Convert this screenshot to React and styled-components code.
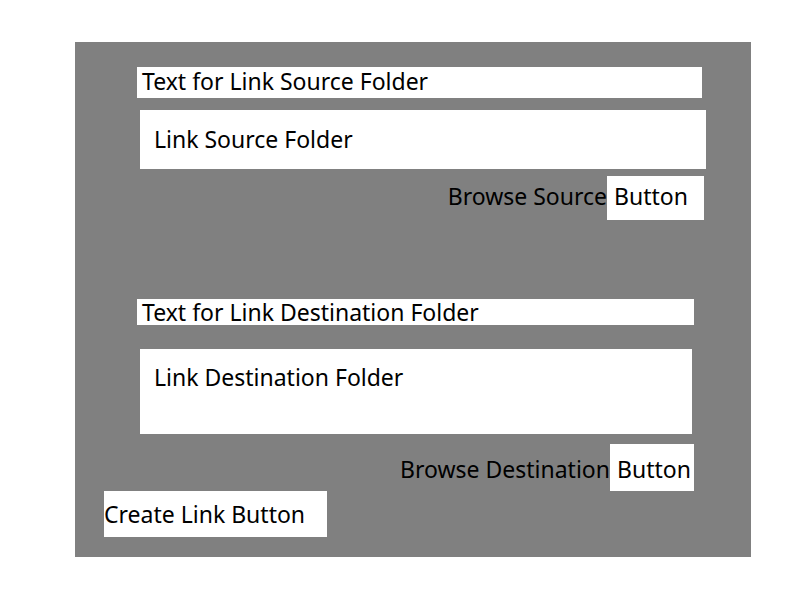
import React from "react";
import styled, { createGlobalStyle } from "styled-components";

const GlobalStyle = createGlobalStyle`
  * { box-sizing: border-box; }
  body { margin: 0; background: #fff; }
  body, input, button { font: 23px/30px "Noto Sans", "Open Sans", sans-serif; color: #000; }
`;

const Page = styled.main`
  padding: 42px 49px 43px 75px;
`;

const Panel = styled.form`
  display: flex;
  flex-direction: column;
  background: #808080;
  padding: 25px 45px 20px 29px;
`;

const Group = styled.section`
  display: flex;
  flex-direction: column;
  margin-left: 33px;
  margin-right: ${(p) => p.$right || 0}px;
  margin-bottom: ${(p) => p.$after || 0}px;
`;

const Caption = styled.label`
  background: #fff;
  height: ${(p) => p.$height}px;
  line-height: ${(p) => p.$line}px;
  padding-left: 5px;
  margin-right: ${(p) => p.$right || 0}px;
  white-space: nowrap;
`;

const PathField = styled.input`
  border: 0;
  border-radius: 0;
  outline: 0;
  background: #fff;
  height: ${(p) => p.$height}px;
  padding: 0 14px ${(p) => p.$lift || 0}px;
  margin: ${(p) => p.$gap}px ${(p) => p.$right || 0}px 0 3px;
`;

const BrowseRow = styled.div`
  display: flex;
  justify-content: flex-end;
  margin-top: ${(p) => p.$gap}px;
  margin-right: ${(p) => p.$right || 0}px;
`;

const BrowseButton = styled.button`
  display: flex;
  border: 0;
  padding: 0;
  background: none;
  white-space: nowrap;
  height: ${(p) => p.$height}px;
  line-height: ${(p) => p.$line}px;
`;

const Highlight = styled.span`
  background: #fff;
  width: ${(p) => p.$width}px;
  height: 100%;
  padding-left: 7px;
  text-align: left;
`;

const CreateButton = styled.button`
  align-self: flex-start;
  width: 223px;
  height: 46px;
  border: 0;
  padding: 0;
  background: #fff;
  text-align: left;
  white-space: nowrap;
`;

export default function App() {
  return (
    <>
      <GlobalStyle />
      <Page>
        <Panel onSubmit={(e) => e.preventDefault()}>
          <Group $after={79}>
            <Caption htmlFor="source" $height={31} $line={28} $right={4}>Text for Link Source Folder</Caption>
            <PathField id="source" defaultValue="Link Source Folder" $height={59} $gap={12} $lift={2} />
            <BrowseRow $gap={7} $right={2}>
              <BrowseButton type="button" aria-label="Browse Source Button" $height={44} $line={40}>
                Browse Source<Highlight $width={97}>Button</Highlight>
              </BrowseButton>
            </BrowseRow>
          </Group>
          <Group $right={12}>
            <Caption htmlFor="destination" $height={26} $line={26}>Text for Link Destination Folder</Caption>
            <PathField id="destination" defaultValue="Link Destination Folder" $height={85} $gap={24} $right={2} $lift={30} />
            <BrowseRow $gap={10}>
              <BrowseButton type="button" aria-label="Browse Destination Button" $height={47} $line={50}>
                Browse Destination<Highlight $width={84}>Button</Highlight>
              </BrowseButton>
            </BrowseRow>
          </Group>
          <CreateButton type="submit">Create Link Button</CreateButton>
        </Panel>
      </Page>
    </>
  );
}
